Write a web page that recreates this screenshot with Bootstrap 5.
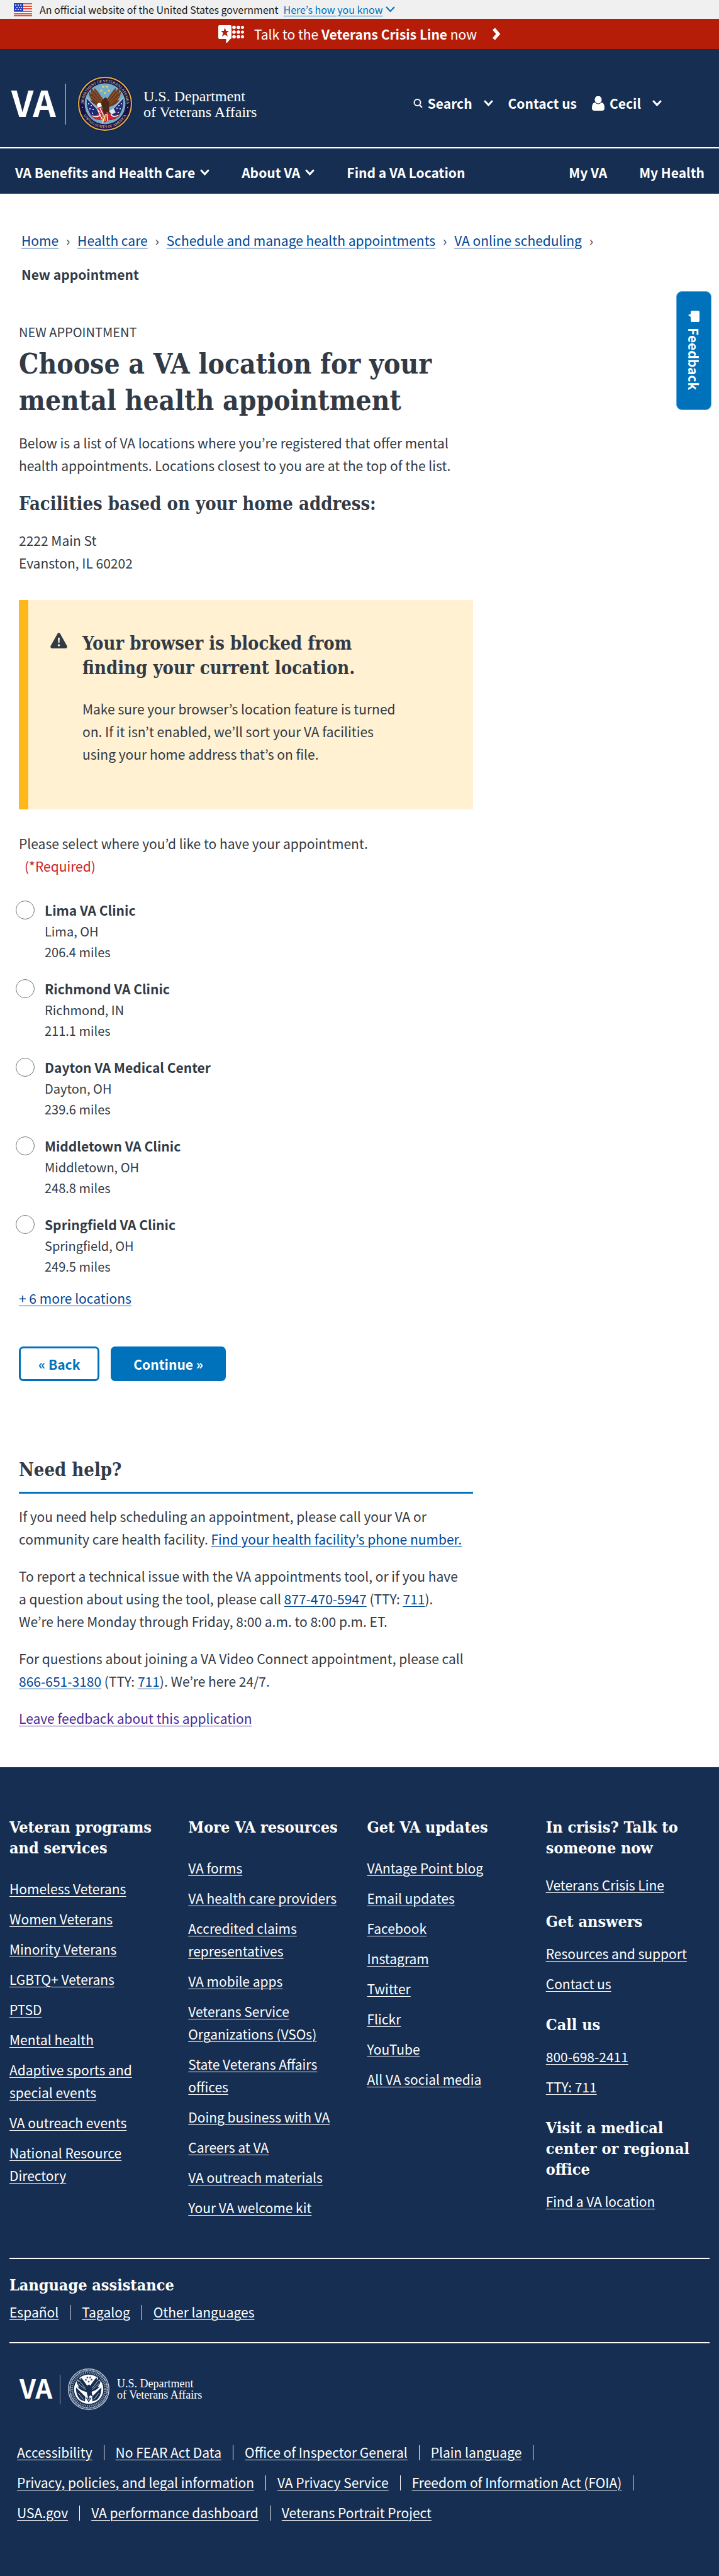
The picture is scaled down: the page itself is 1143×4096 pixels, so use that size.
<!DOCTYPE html>
<html lang="en">
<head>
<meta charset="utf-8">
<meta name="viewport" content="width=device-width, initial-scale=1">
<title>Choose a VA location | Veterans Affairs</title>
<link href="https://cdn.jsdelivr.net/npm/bootstrap@5.3.0/dist/css/bootstrap.min.css" rel="stylesheet">
<style>
  :root { --navy: #162e51; --blue: #0071bb; --ink: #323a45; --link: #004795; }
  body { font-family: "Noto Sans CJK KR", "Open Sans", sans-serif; font-size: 21px; line-height: 36px; color: var(--ink); background: #fff; }
  h1, h2, h3 { font-family: "DejaVu Serif Condensed", "DejaVu Serif", serif; font-weight: 700; margin: 0; }
  h1 { font-size: 44px; line-height: 58px; }
  h2, h3 { font-size: 29px; line-height: 39px; }
  a { color: var(--link); text-decoration: underline; text-underline-offset: 3px; text-decoration-thickness: 1px; }
  p { margin: 0; }
  svg { flex: none; display: block; }
  .brand-mark { overflow: visible; }

  .gov-strip { background: #f0f0f0; color: #1b1b1b; height: 30px; padding-left: 22px; font-size: 16px; line-height: 28px; }
  .gov-strip button { color: var(--blue); font-size: 16px; line-height: 28px; text-decoration: underline; text-underline-offset: 3px; }
  .gov-strip .strip-chev { color: var(--blue); }
  .plain-btn { background: none; border: 0; padding: 0; color: inherit; font-weight: inherit; display: inline-flex; align-items: center; }
  .crisis-strip { background: #b51d09; height: 48px; color: #fff; text-decoration: none; }
  .crisis-strip:hover { color: #fff; }

  .site-head { background: var(--navy); color: #fff; }
  .site-head a { color: #fff; text-decoration: none; }
  .brand-row { height: 156px; padding: 18px 91px 0 18px; }
  .tool-row { font-weight: 700; padding-bottom: 2px; }
  .tool-row .chev-gap { margin-left: 18px; }
  .main-menu { height: 74px; border-top: 2px solid #fff; padding: 4px 23px 0 24px; font-weight: 700; gap: 51px; }

  .page-main { padding: 47px 30px 60px; }
  .crumbs { padding-left: 4px; margin: 0 0 47px; }
  .crumbs li { padding: 9px 0; }
  .crumbs .crumb-sep { width: 30px; text-align: center; }
  .eyebrow-text { font-size: 20px; margin-bottom: 4px; }
  .intro-text { margin-top: 20px; }
  .home-address { margin-top: 20px; }
  .warn-box { background: #fff1d2; border-left: 15px solid #ffb81c; padding: 50px 110px 70px 35px; margin: 41px 0 36px; gap: 24px; }
  .warn-box p { margin-top: 27px; }
  .pick-title { font-size: 21px; line-height: 36px; margin-bottom: 0; }
  .pick-list { padding-top: 36px; }
  .need-mark { color: #cd2026; padding-left: 9px; }
  .site-pick { gap: 16px; margin: 0 0 26px -5px; line-height: 33px; }
  .site-pick .form-check-input { width: 30px; height: 30px; margin: 1px 0 0; border: 1px solid #757575; flex: none; }
  .site-pick span { font-size: 20px; display: block; }
  .site-pick strong { display: block; }
  .more-btn { display: flex; color: var(--link); text-decoration: underline; text-underline-offset: 3px; text-decoration-thickness: 1px; margin-top: -10px; }
  .step-btns { gap: 18px; margin-top: 59px; }
  .nav-btn { height: 55px; border: 3px solid var(--blue); border-radius: 7px; font-weight: 700; font-size: 21px; line-height: 36px; padding: 0 28px; }
  .nav-btn.go-btn { background: var(--blue); color: #fff; padding: 0 33px; }
  .nav-btn.back-btn { background: #fff; color: var(--blue); }
  .help-part { margin-top: 122px; }
  .help-part h2 { padding-bottom: 15px; border-bottom: 3px solid var(--blue); margin-bottom: 18px; }
  .help-part p + p { margin-top: 23px; }
  .help-part .seen-link { color: #4c2c92; }

  .feedback-tab { position: absolute; top: 463px; right: 12px; width: 56px; height: 189px; background: var(--blue); border: 1px solid #5da5d6; border-radius: 9px; color: #fff; font-weight: 700; font-size: 21px; line-height: 54px; writing-mode: vertical-rl; display: flex; align-items: center; justify-content: center; gap: 9px; padding: 0; }

  .site-foot { background: var(--navy); color: #fff; padding: 79px 15px 0; }
  .site-foot a { color: #fff; }
  .site-foot h2 { font-size: 25px; line-height: 33px; }
  .foot-list { list-style: none; padding: 0; margin: 0; display: grid; gap: 12px; }
  .long-list { margin-top: 30px; }
  .side-list { margin: 16px 0 31px; }
  .lang-part { border-top: 2px solid #fff; border-bottom: 2px solid #fff; padding: 25px 0 30px; margin-top: 62px; }
  .bar-list { list-style: none; padding: 0; margin: 0; display: flex; flex-wrap: wrap; row-gap: 12px; }
  .bar-list li { display: flex; align-items: center; }
  .bar-list li:not(:last-child)::after { content: ""; width: 1px; height: 24px; background: #fff; margin: 2px 18px 0; }
  .legal-part { padding: 40px 30px 83px 12px; }
  .legal-part .bar-list { margin-top: 48px; }
</style>
</head>
<body>

<!-- Shared shapes -->
<svg width="0" height="0" class="position-absolute" aria-hidden="true">
  <defs>
    <symbol id="chev" viewBox="0 0 15 10"><path d="M2 2 L7.500 8 L13 2" fill="none" stroke="currentColor" stroke-width="3" stroke-linecap="round" stroke-linejoin="miter"/></symbol>
    <path id="ring-top" d="M11.200 52.800 A34 34 0 1 1 76.800 52.800"/>
    <path id="ring-low" d="M7.800 57.200 A38.500 38.500 0 0 0 80.200 57.200"/>
    <path id="wing-l" d="M40 50 C33 48 24 45 20 38 L24 39 C20 35 18 29 18.500 24 L23 29 C21.500 25 21 22 22 18 L27 25 C26.500 23 26.500 21 27.500 19 C32 24 37 31 41 37 L43 45 Z"/>
    <path id="wing-r" d="M48 50 C54 48 63 45 67 38 L63 39 C67 35 69.500 29 69 24 L65 29 C67 25 67.500 22 66.500 18 L61 25 C61.500 23 61.500 21 60.500 19 C56 24 51 31 47 37 L44 45 Z"/>
    <path id="body-e" d="M39 46 C37 40 41 35 45 34 C49 36 51 41 50 48 L51 55 L54 60 L47 57 L43 63 L41 56 Z"/>
    <path id="star5" d="M0-2.600 L0.700-0.800 L2.500-0.800 L1.100 0.400 L1.600 2.200 L0 1.100 L-1.600 2.200 L-1.100 0.400 L-2.500-0.800 L-0.700-0.800 Z"/>
  </defs>
</svg>

<div class="gov-strip d-flex align-items-center">
  <svg width="29" height="21" viewBox="0 0 29 21" aria-hidden="true">
    <rect width="29" height="21" fill="#fff"/>
    <g fill="#e15340"><rect width="29" height="2"/><rect y="4" width="29" height="2"/><rect y="8" width="29" height="2"/><rect y="12" width="29" height="2"/><rect y="16" width="29" height="2"/><rect y="19" width="29" height="2"/></g>
    <rect width="15" height="13" fill="#2b3fb8"/>
    <g fill="#fff"><circle cx="3" cy="3" r="1"/><circle cx="7" cy="3" r="1"/><circle cx="11" cy="3" r="1"/><circle cx="5" cy="7" r="1"/><circle cx="9" cy="7" r="1"/><circle cx="12" cy="7" r="1"/><circle cx="3" cy="10" r="1"/><circle cx="7" cy="10" r="1"/><circle cx="11" cy="10" r="1"/></g>
  </svg>
  <span class="ms-2 ps-1">An official website of the United States government</span>
  <button type="button" class="plain-btn ms-2">Here’s how you know</button>
  <svg class="strip-chev ms-1" width="15" height="10" viewBox="0 0 15 10" aria-hidden="true"><path d="M1 1 L7.500 8 L14 1" fill="none" stroke="currentColor" stroke-width="2"/></svg>
</div>

<a href="#" class="crisis-strip d-flex align-items-center justify-content-center">
  <svg width="41" height="28" viewBox="0 0 41 28" aria-hidden="true">
    <path d="M2 0 H19 Q21 0 21 2 V20 Q21 22 19 22 L14 28 H12.500 V22 H2 Q0 22 0 20 V2 Q0 0 2 0 Z" fill="#fff"/>
    <path d="M10.500 4 L12.300 9 H17 L13.300 12.200 L15 18 L10.500 15 L6 18 L7.700 12.200 L4 9 H8.700 Z" fill="#b51d09"/>
    <g fill="#fff"><circle cx="25" cy="3.500" r="2.800"/><circle cx="32" cy="3.500" r="2.800"/><circle cx="38.500" cy="3.500" r="2.500"/><circle cx="25" cy="11" r="2.800"/><circle cx="32" cy="11" r="2.800"/><circle cx="38.500" cy="11" r="2.500"/><circle cx="25" cy="18.500" r="2.800"/><circle cx="32" cy="18.500" r="2.800"/><circle cx="38.500" cy="18.500" r="2.500"/></g>
  </svg>
  <span class="ms-3">Talk to the <strong>Veterans Crisis Line</strong> now</span>
  <svg class="ms-4" width="14" height="20" viewBox="0 0 14 20" aria-hidden="true"><path d="M3 2 L10 10 L3 18" fill="none" stroke="#fff" stroke-width="5"/></svg>
</a>

<header class="site-head">
  <div class="brand-row d-flex align-items-center justify-content-between">
    <a href="#" aria-label="VA home">
      <svg class="brand-mark" width="400" height="90" viewBox="0 0 400 90">
        <text x="0" y="66" font-family="Noto Sans CJK KR, sans-serif" font-weight="700" font-size="57" fill="#fff">VA</text>
        <rect x="86" y="13" width="1" height="65" fill="#c9d0da"/>
        <g transform="translate(105 0)">
          <circle cx="44" cy="45" r="44" fill="#1a1446"/>
          <g transform="translate(0 1)">
            <circle cx="44" cy="44" r="42" fill="none" stroke="#e2b33c" stroke-width="2"/>
            <circle cx="44" cy="44" r="32.500" fill="#73adc9"/>
            <g font-family="Liberation Serif, serif" font-size="6" fill="#f0dd94">
              <text><textPath href="#ring-top" startOffset="50%" text-anchor="middle">DEPARTMENT OF VETERANS AFFAIRS</textPath></text>
              <text><textPath href="#ring-low" startOffset="50%" text-anchor="middle">UNITED STATES OF AMERICA</textPath></text>
            </g>
            <path d="M15 36 L38 60 L36 70 L28 68 C19 62 14 50 15 36 Z" fill="#232a72"/>
            <path d="M73 36 L50 60 L52 70 L60 68 C69 62 74 50 73 36 Z" fill="#232a72"/>
            <g fill="#fff"><circle cx="18" cy="44" r="1"/><circle cx="22" cy="47" r="1"/><circle cx="20" cy="52" r="1"/><circle cx="25" cy="53" r="1"/><circle cx="24" cy="59" r="1"/><circle cx="70" cy="44" r="1"/><circle cx="66" cy="47" r="1"/><circle cx="68" cy="52" r="1"/><circle cx="63" cy="51" r="1"/><circle cx="65" cy="58" r="1"/></g>
            <path d="M20 61 Q30 66 34 58 L30 52 L36 49 L42 54 L45 58 L50 58 Q58 66 68 60 Q65 69 54 68 L47 72 L43 74 L38 69 Q26 70 20 61 Z" fill="#c8262f"/>
            <path d="M24 63 Q32 67 37 61 M32 53 L39 68 M36 51 L43 66 M53 61 Q58 67 65 62 M40 74 L45 60 M48 71 L47 60" stroke="#fff" stroke-width="1.500" fill="none"/>
            <path d="M15 34 L37 58 M73 34 L51 58" stroke="#e6e3dc" stroke-width="1"/>
            <use href="#wing-l" fill="#6b3a1e"/><use href="#wing-r" fill="#6b3a1e"/><use href="#body-e" fill="#4c2814"/>
            <path d="M23 25 L37 42 M22 32 L37 45 M27 23 L40 40 M65 25 L51 42 M66 32 L52 45 M61 23 L48 40" stroke="#a8693c" stroke-width="1" fill="none"/>
            <path d="M31 46 Q32 42 37 43 L39 48 L33 50 Z" fill="#fff"/><path d="M50 55 L58 52 L61 58 L54 61 Z" fill="#dfe8f2"/>
            <path d="M42 60 L39 72 M44 62 L44 72" stroke="#e2b33c" stroke-width="1.500"/>
            <g fill="#f2d160"><use href="#star5" x="41" y="17"/><use href="#star5" x="47" y="17"/><use href="#star5" x="38" y="23"/><use href="#star5" x="50" y="23"/><use href="#star5" x="44" y="27"/></g>
            <circle cx="8" cy="50" r="1" fill="#e2b33c"/><circle cx="80" cy="50" r="1" fill="#e2b33c"/>
          </g>
        </g>
        <g font-family="Liberation Serif, serif" font-size="24" fill="#fff"><text x="210" y="41">U.S. Department</text><text x="210" y="66">of Veterans Affairs</text></g>
      </svg>
    </a>
    <div class="tool-row d-flex align-items-center">
      <button type="button" class="plain-btn">
        <svg width="15" height="15" viewBox="0 0 15 15" aria-hidden="true"><circle cx="6.500" cy="6" r="5" fill="none" stroke="#fff" stroke-width="2"/><path d="M10 10 L14 14" stroke="#fff" stroke-width="2"/></svg>
        <span class="ms-2">Search</span><svg class="chev-gap" width="15" height="10"><use href="#chev"/></svg>
      </button>
      <a href="#" class="ms-4">Contact us</a>
      <button type="button" class="plain-btn ms-4">
        <svg width="20" height="23" viewBox="0 0 20 23" aria-hidden="true"><ellipse cx="10" cy="5.500" rx="5.500" ry="6" fill="#fff"/><path d="M0 19 Q0 10 5 10 Q10 15 15 10 Q20 10 20 19 Q20 23 16 23 H4 Q0 23 0 19 Z" fill="#fff"/></svg>
        <span class="ms-2">Cecil</span><svg class="chev-gap" width="15" height="10"><use href="#chev"/></svg>
      </button>
    </div>
  </div>
  <nav class="main-menu d-flex align-items-center" aria-label="Main">
    <button type="button" class="plain-btn">VA Benefits and Health Care<svg class="ms-2" width="15" height="10"><use href="#chev"/></svg></button>
    <button type="button" class="plain-btn">About VA<svg class="ms-2" width="15" height="10"><use href="#chev"/></svg></button>
    <a href="#">Find a VA Location</a>
    <a href="#" class="ms-auto">My VA</a>
    <a href="#">My Health</a>
  </nav>
</header>

<button type="button" class="feedback-tab">
  <svg width="18" height="18" viewBox="0 0 18 18" aria-hidden="true"><path d="M6 0 H16 Q18 0 18 2 V16 Q18 18 16 18 H6 Q4 18 4 16 V10 L0 7 L4 5 V2 Q4 0 6 0 Z" fill="#fff"/></svg>
  Feedback
</button>

<main class="page-main">
  <nav aria-label="Breadcrumb">
    <ol class="crumbs list-unstyled d-flex flex-wrap">
      <li class="d-flex"><a href="#">Home</a><span class="crumb-sep">›</span></li>
      <li class="d-flex"><a href="#">Health care</a><span class="crumb-sep">›</span></li>
      <li class="d-flex"><a href="#">Schedule and manage health appointments</a><span class="crumb-sep">›</span></li>
      <li class="d-flex"><a href="#">VA online scheduling</a><span class="crumb-sep">›</span></li>
      <li class="w-100"><strong>New appointment</strong></li>
    </ol>
  </nav>

  <div class="row g-0">
    <div class="col-8">
      <p class="eyebrow-text text-uppercase">New appointment</p>
      <h1>Choose a VA location for your mental health appointment</h1>
      <p class="intro-text">Below is a list of VA locations where you’re registered that offer mental health appointments. Locations closest to you are at the top of the list.</p>
      <h2 class="mt-4">Facilities based on your home address:</h2>
      <p class="home-address">2222 Main St<br>Evanston, IL 60202</p>

      <section class="warn-box d-flex align-items-start">
        <svg width="27" height="27" viewBox="0 0 27 27" aria-hidden="true"><path d="M11.500 3.500 Q13.500 0.500 15.500 3.500 L26.500 23 Q27.500 26.500 24.500 27 H2.500 Q-0.500 26.500 0.500 23 Z" fill="#323a45"/><path d="M12 10 H15 L14.500 18 H12.500 Z" fill="#fff1d2"/><circle cx="13.500" cy="22" r="1.800" fill="#fff1d2"/></svg>
        <div>
          <h3>Your browser is blocked from finding your current location.</h3>
          <p>Make sure your browser’s location feature is turned on. If it isn’t enabled, we’ll sort your VA facilities using your home address that’s on file.</p>
        </div>
      </section>

      <form>
        <fieldset>
          <legend class="pick-title">Please select where you’d like to have your appointment.<br><span class="need-mark">(*Required)</span></legend>
          <div class="pick-list">
            <div class="site-pick d-flex"><input class="form-check-input" type="radio" name="site" id="site1"><label for="site1"><strong>Lima VA Clinic</strong><span>Lima, OH</span><span>206.4 miles</span></label></div>
            <div class="site-pick d-flex"><input class="form-check-input" type="radio" name="site" id="site2"><label for="site2"><strong>Richmond VA Clinic</strong><span>Richmond, IN</span><span>211.1 miles</span></label></div>
            <div class="site-pick d-flex"><input class="form-check-input" type="radio" name="site" id="site3"><label for="site3"><strong>Dayton VA Medical Center</strong><span>Dayton, OH</span><span>239.6 miles</span></label></div>
            <div class="site-pick d-flex"><input class="form-check-input" type="radio" name="site" id="site4"><label for="site4"><strong>Middletown VA Clinic</strong><span>Middletown, OH</span><span>248.8 miles</span></label></div>
            <div class="site-pick d-flex"><input class="form-check-input" type="radio" name="site" id="site5"><label for="site5"><strong>Springfield VA Clinic</strong><span>Springfield, OH</span><span>249.5 miles</span></label></div>
          </div>
        </fieldset>
        <button type="button" class="plain-btn more-btn">+ 6 more locations</button>
        <div class="step-btns d-flex">
          <button type="button" class="nav-btn back-btn">« Back</button>
          <button type="submit" class="nav-btn go-btn">Continue »</button>
        </div>
      </form>

      <section class="help-part">
        <h2>Need help?</h2>
        <p>If you need help scheduling an appointment, please call your VA or community care health facility. <a href="#">Find your health facility’s phone number.</a></p>
        <p>To report a technical issue with the VA appointments tool, or if you have a&nbsp;question about using the tool, please call <a href="#">877-470-5947</a> (TTY: <a href="#">711</a>).<br>We’re here Monday through Friday, 8:00 a.m. to 8:00 p.m. ET.</p>
        <p>For questions about joining a VA Video Connect appointment, please call <a href="#">866-651-3180</a> (TTY: <a href="#">711</a>). We’re here 24/7.</p>
        <p><a href="#" class="seen-link">Leave feedback about this application</a></p>
      </section>
    </div>
  </div>
</main>

<footer class="site-foot">
  <div class="row gx-4">
    <div class="col-3">
      <h2>Veteran programs and services</h2>
      <ul class="foot-list long-list">
        <li><a href="#">Homeless Veterans</a></li>
        <li><a href="#">Women Veterans</a></li>
        <li><a href="#">Minority Veterans</a></li>
        <li><a href="#">LGBTQ+ Veterans</a></li>
        <li><a href="#">PTSD</a></li>
        <li><a href="#">Mental health</a></li>
        <li><a href="#">Adaptive sports and<br>special events</a></li>
        <li><a href="#">VA outreach events</a></li>
        <li><a href="#">National Resource<br>Directory</a></li>
      </ul>
    </div>
    <div class="col-3">
      <h2>More VA resources</h2>
      <ul class="foot-list long-list">
        <li><a href="#">VA forms</a></li>
        <li><a href="#">VA health care providers</a></li>
        <li><a href="#">Accredited claims<br>representatives</a></li>
        <li><a href="#">VA mobile apps</a></li>
        <li><a href="#">Veterans Service<br>Organizations (VSOs)</a></li>
        <li><a href="#">State Veterans Affairs<br>offices</a></li>
        <li><a href="#">Doing business with VA</a></li>
        <li><a href="#">Careers at VA</a></li>
        <li><a href="#">VA outreach materials</a></li>
        <li><a href="#">Your VA welcome kit</a></li>
      </ul>
    </div>
    <div class="col-3">
      <h2>Get VA updates</h2>
      <ul class="foot-list long-list">
        <li><a href="#">VAntage Point blog</a></li>
        <li><a href="#">Email updates</a></li>
        <li><a href="#">Facebook</a></li>
        <li><a href="#">Instagram</a></li>
        <li><a href="#">Twitter</a></li>
        <li><a href="#">Flickr</a></li>
        <li><a href="#">YouTube</a></li>
        <li><a href="#">All VA social media</a></li>
      </ul>
    </div>
    <div class="col-3">
      <h2>In crisis? Talk to someone now</h2>
      <ul class="foot-list my-4"><li><a href="#">Veterans Crisis Line</a></li></ul>
      <h2>Get answers</h2>
      <ul class="foot-list side-list"><li><a href="#">Resources and support</a></li><li><a href="#">Contact us</a></li></ul>
      <h2>Call us</h2>
      <ul class="foot-list side-list"><li><a href="#">800-698-2411</a></li><li><a href="#">TTY: 711</a></li></ul>
      <h2>Visit a medical center or regional office</h2>
      <ul class="foot-list mt-3"><li><a href="#">Find a VA location</a></li></ul>
    </div>
  </div>

  <section class="lang-part">
    <h2>Language assistance</h2>
    <ul class="bar-list mt-2">
      <li><a href="#">Español</a></li>
      <li><a href="#">Tagalog</a></li>
      <li><a href="#">Other languages</a></li>
    </ul>
  </section>

  <div class="legal-part">
    <a href="#" aria-label="VA home">
      <svg class="brand-mark" width="300" height="67" viewBox="0 0 300 67">
        <text x="4" y="48" font-family="Noto Sans CJK KR, sans-serif" font-weight="700" font-size="42" fill="#fff">VA</text>
        <rect x="68" y="10" width="1" height="47" fill="#9aa7ba"/>
        <g transform="translate(81 0) scale(0.750)">
          <circle cx="44" cy="44" r="43" fill="#162e51" stroke="#b9c3d1" stroke-width="2"/>
          <circle cx="44" cy="44" r="39.500" fill="none" stroke="#b9c3d1" stroke-width="3" stroke-dasharray="2 1"/>
          <circle cx="44" cy="44" r="31" fill="#fff"/>
          <circle cx="44" cy="44" r="35" fill="none" stroke="#8c9ab0" stroke-width="4" stroke-dasharray="2 2"/>
          <g fill="#162e51">
            <path d="M17 40 L37 60 L36 70 L28 67 C20 61 17 52 17 40 Z"/><path d="M71 40 L51 60 L52 70 L60 67 C68 61 71 52 71 40 Z"/>
            <use href="#wing-l"/><use href="#wing-r"/><use href="#body-e"/>
            <use href="#star5" x="41" y="19"/><use href="#star5" x="47" y="19"/><use href="#star5" x="38" y="24"/><use href="#star5" x="50" y="24"/><use href="#star5" x="44" y="28"/>
            <path d="M38 62 L44 72 L50 62 Z"/>
          </g>
          <path d="M23 25 L37 42 M22 32 L37 45 M65 25 L51 42 M66 32 L52 45 M22 52 L33 66 M66 52 L55 66 M40 60 L44 68 L48 60" stroke="#fff" stroke-width="1" fill="none"/>
        </g>
        <g font-family="Liberation Serif, serif" font-size="18" fill="#fff"><text x="159" y="30">U.S. Department</text><text x="159" y="48">of Veterans Affairs</text></g>
      </svg>
    </a>
    <ul class="bar-list">
      <li><a href="#">Accessibility</a></li>
      <li><a href="#">No FEAR Act Data</a></li>
      <li><a href="#">Office of Inspector General</a></li>
      <li><a href="#">Plain language</a></li>
      <li><a href="#">Privacy, policies, and legal information</a></li>
      <li><a href="#">VA Privacy Service</a></li>
      <li><a href="#">Freedom of Information Act (FOIA)</a></li>
      <li><a href="#">USA.gov</a></li>
      <li><a href="#">VA performance dashboard</a></li>
      <li><a href="#">Veterans Portrait Project</a></li>
    </ul>
  </div>
</footer>

<script src="https://cdn.jsdelivr.net/npm/bootstrap@5.3.0/dist/js/bootstrap.bundle.min.js"></script>
</body>
</html>
